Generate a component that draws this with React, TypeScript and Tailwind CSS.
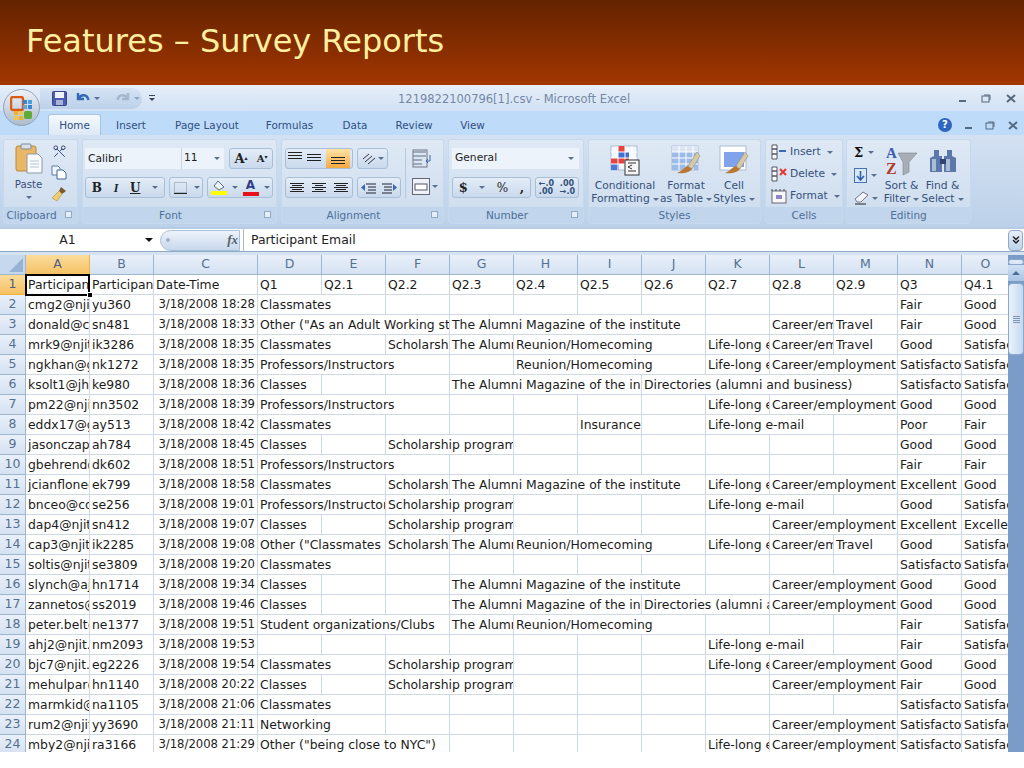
import type { ReactNode } from 'react'
import { ChevronsDown, Scissors } from 'lucide-react'

const COLS = ['A', 'B', 'C', 'D', 'E', 'F', 'G', 'H', 'I', 'J', 'K', 'L', 'M', 'N', 'O']

// [start column index, span, text]
type Entry = [number, number, string]

const CLASSMATES: Entry = [3, 2, 'Classmates']
const CLASSES: Entry = [3, 1, 'Classes']
const PROFS: Entry = [3, 3, 'Professors/Instructors']
const SCHOLAR: Entry = [5, 2, 'Scholarship program']
const SCHOLAR_CLIP: Entry = [5, 1, 'Scholarship program']
const ALUMNI: Entry = [6, 4, 'The Alumni Magazine of the institute']
const ALUMNI_CLIP: Entry = [6, 1, 'The Alumni Magazine of the institute']
const REUNION: Entry = [7, 3, 'Reunion/Homecoming']
const LIFE: Entry = [10, 1, 'Life-long education']
const LIFE_MAIL: Entry = [10, 2, 'Life-long e-mail']
const CAREER: Entry = [11, 2, 'Career/employment services']
const CAREER_CLIP: Entry = [11, 1, 'Career/employment services']
const TRAVEL: Entry = [12, 1, 'Travel']

const q3 = (text: string): Entry => [13, 1, text]
const q4 = (text: string): Entry => [14, 1, text]

const ROWS: { a: string; b: string; t: string; e: Entry[] }[] = [
  { a: 'cmg2@njit.edu', b: 'yu360', t: '18:28', e: [CLASSMATES, q3('Fair'), q4('Good')] },
  { a: 'donald@comcast', b: 'sn481', t: '18:33', e: [[3, 3, 'Other ("As an Adult Working student")'], ALUMNI, CAREER_CLIP, TRAVEL, q3('Fair'), q4('Good')] },
  { a: 'mrk9@njit.edu', b: 'ik3286', t: '18:35', e: [CLASSMATES, SCHOLAR_CLIP, ALUMNI_CLIP, REUNION, LIFE, CAREER_CLIP, TRAVEL, q3('Good'), q4('Satisfactory')] },
  { a: 'ngkhan@gmail', b: 'nk1272', t: '18:35', e: [PROFS, REUNION, LIFE, CAREER, q3('Satisfactory'), q4('Satisfactory')] },
  { a: 'ksolt1@jhu.edu', b: 'ke980', t: '18:36', e: [CLASSES, [6, 3, 'The Alumni Magazine of the institute'], [9, 4, 'Directories (alumni and business)'], q3('Satisfactory'), q4('Satisfactory')] },
  { a: 'pm22@njit.edu', b: 'nn3502', t: '18:39', e: [PROFS, LIFE, CAREER, q3('Good'), q4('Good')] },
  { a: 'eddx17@gmail', b: 'ay513', t: '18:42', e: [CLASSMATES, [8, 1, 'Insurance'], LIFE_MAIL, q3('Poor'), q4('Fair')] },
  { a: 'jasonczap@njit', b: 'ah784', t: '18:45', e: [CLASSES, SCHOLAR, q3('Good'), q4('Good')] },
  { a: 'gbehrend@njit', b: 'dk602', t: '18:51', e: [PROFS, q3('Fair'), q4('Fair')] },
  { a: 'jcianflone@njit', b: 'ek799', t: '18:58', e: [CLASSMATES, SCHOLAR_CLIP, ALUMNI, LIFE, CAREER, q3('Excellent'), q4('Good')] },
  { a: 'bnceo@comcast', b: 'se256', t: '19:01', e: [[3, 2, 'Professors/Instructors'], SCHOLAR, LIFE_MAIL, q3('Good'), q4('Satisfactory')] },
  { a: 'dap4@njit.edu', b: 'sn412', t: '19:07', e: [CLASSES, SCHOLAR, CAREER, q3('Excellent'), q4('Excellent')] },
  { a: 'cap3@njit.edu', b: 'ik2285', t: '19:08', e: [[3, 2, 'Other ("Classmates and friends")'], SCHOLAR_CLIP, ALUMNI_CLIP, REUNION, LIFE, CAREER_CLIP, TRAVEL, q3('Good'), q4('Satisfactory')] },
  { a: 'soltis@njit.edu', b: 'se3809', t: '19:20', e: [CLASSMATES, q3('Satisfactory'), q4('Satisfactory')] },
  { a: 'slynch@ajc.com', b: 'hn1714', t: '19:34', e: [CLASSES, ALUMNI, CAREER, q3('Good'), q4('Good')] },
  { a: 'zannetos@njit', b: 'ss2019', t: '19:46', e: [CLASSES, [6, 3, 'The Alumni Magazine of the institute'], [9, 2, 'Directories (alumni and business)'], CAREER, q3('Good'), q4('Good')] },
  { a: 'peter.belt@njit', b: 'ne1377', t: '19:51', e: [[3, 3, 'Student organizations/Clubs'], ALUMNI_CLIP, REUNION, q3('Fair'), q4('Satisfactory')] },
  { a: 'ahj2@njit.edu', b: 'nm2093', t: '19:53', e: [LIFE_MAIL, q3('Fair'), q4('Satisfactory')] },
  { a: 'bjc7@njit.edu', b: 'eg2226', t: '19:54', e: [CLASSMATES, SCHOLAR, LIFE, CAREER, q3('Good'), q4('Good')] },
  { a: 'mehulpar@njit', b: 'hn1140', t: '20:22', e: [CLASSES, SCHOLAR, CAREER, q3('Fair'), q4('Good')] },
  { a: 'marmkid@aol', b: 'na1105', t: '21:06', e: [CLASSMATES, q3('Satisfactory'), q4('Satisfactory')] },
  { a: 'rum2@njit.edu', b: 'yy3690', t: '21:11', e: [[3, 2, 'Networking'], CAREER, q3('Satisfactory'), q4('Satisfactory')] },
  { a: 'mby2@njit.edu', b: 'ra3166', t: '21:29', e: [[3, 3, 'Other ("being close to NYC")'], LIFE, CAREER, q3('Satisfactory'), q4('Satisfactory')] },
]

const HEAD = ['Participant Email', 'Participant', 'Date-Time', 'Q1', 'Q2.1', 'Q2.2', 'Q2.3', 'Q2.4', 'Q2.5', 'Q2.6', 'Q2.7', 'Q2.8', 'Q2.9', 'Q3', 'Q4.1']

function Cell({ span = 1, children, right }: { span?: number; children?: ReactNode; right?: boolean }) {
  return (
    <div
      className={
        'h-5 overflow-hidden whitespace-nowrap border-r border-b border-[#d0d7e5] pl-[2px] leading-[19px] ' +
        (right ? 'text-right pr-[2px] text-[11.6px]' : '')
      }
      style={{ gridColumn: 'span ' + span }}
    >
      {children}
    </div>
  )
}

function RowHead({ n, active }: { n: number; active?: boolean }) {
  return (
    <div
      className={
        'flex h-5 items-center justify-center border-r border-b text-[12.5px] ' +
        (active
          ? 'border-[#f2b33d] bg-gradient-to-b from-[#fbdc9c] to-[#f5c163] text-[#4b5f7e]'
          : 'border-[#9eb6ce] bg-gradient-to-b from-[#e9f0fa] to-[#d5e2f2] text-[#56708f]')
      }
    >
      {n}
    </div>
  )
}

function DataRow({ n, row }: { n: number; row: (typeof ROWS)[number] }) {
  const cells: ReactNode[] = []
  let col = 3
  for (const [start, span, text] of [...row.e].sort((x, y) => x[0] - y[0])) {
    while (col < start) {
      cells.push(<Cell key={col} />)
      col++
    }
    cells.push(
      <Cell key={col} span={span}>
        {text}
      </Cell>,
    )
    col += span
  }
  return (
    <>
      <RowHead n={n} />
      <Cell>{row.a}</Cell>
      <Cell>{row.b}</Cell>
      <Cell right>3/18/2008 {row.t}</Cell>
      {cells}
    </>
  )
}

function Sheet() {
  return (
    <div className="flex h-[497px] overflow-hidden bg-white font-['DejaVu_Sans',sans-serif] text-[12.4px] text-[#1c1c1c]">
      <div className="grid w-[1008px] flex-none grid-cols-[26px_64px_64px_104px_repeat(11,64px)_48px] content-start overflow-hidden">
        <div className="relative h-5 border-r border-b border-[#9eb6ce] bg-[#c6d8ee]">
          <div className="absolute right-[2px] bottom-[2px] h-0 w-0 border-b-[14px] border-l-[14px] border-b-[#96b3d6] border-l-transparent" />
        </div>
        {COLS.map((c, i) => (
          <div
            key={c}
            className={
              'flex h-5 items-center justify-center border-r border-b text-[12.5px] ' +
              (i === 0
                ? 'border-[#f2b33d] bg-gradient-to-b from-[#fbdc9c] to-[#f5c163] text-[#4b5f7e]'
                : 'border-[#9eb6ce] bg-gradient-to-b from-[#e9f0fa] to-[#d5e2f2] text-[#56708f]')
            }
          >
            {c}
          </div>
        ))}
        <RowHead n={1} active />
        <div className="relative z-10 h-5 whitespace-nowrap pl-[2px] leading-[19px]">
          <div className="h-5 overflow-hidden">{HEAD[0]}</div>
          <div className="absolute -top-px -left-px h-[22px] w-[65px] border-2 border-black" />
          <div className="absolute -right-[3px] -bottom-[3px] h-[6px] w-[6px] border border-white bg-black" />
        </div>
        {HEAD.slice(1).map((h) => (
          <Cell key={h}>{h}</Cell>
        ))}
        {ROWS.map((row, i) => (
          <DataRow key={row.b} n={i + 2} row={row} />
        ))}
      </div>
      <Scrollbar />
    </div>
  )
}

function Scrollbar() {
  return (
    <div className="flex w-4 flex-none flex-col bg-[#7b9bc8]">
      <div className="mt-[4px] h-[6px] rounded-sm border border-[#8aa6ca] bg-[#dce8f6]" />
      <div className="flex h-4 items-center justify-center bg-gradient-to-b from-[#cfe0f4] to-[#a9c4e4]">
        <div className="h-0 w-0 border-r-[4px] border-b-[4px] border-l-[4px] border-r-transparent border-b-[#4d6d95] border-l-transparent" />
      </div>
      <div className="mt-[2px] flex h-[72px] items-center justify-center rounded-sm border border-[#8ca9cc] bg-gradient-to-r from-[#eaf2fb] to-[#c4d8ef]">
        <div className="flex w-[7px] flex-col gap-px">
          <div className="h-px bg-[#7d95b5]" />
          <div className="h-px bg-[#7d95b5]" />
          <div className="h-px bg-[#7d95b5]" />
          <div className="h-px bg-[#7d95b5]" />
        </div>
      </div>
    </div>
  )
}

/* ribbon parts */

function Group({ w, label, launcher, children }: { w: string; label: string; launcher?: boolean; children: ReactNode }) {
  return (
    <div className={w + ' flex h-[85px] flex-none flex-col overflow-hidden rounded-[3px] border border-[#c6d8ec] bg-gradient-to-b from-[#dfe9f5] to-[#ccdcee]'}>
      <div className="min-h-0 flex-1">{children}</div>
      <div className={'relative flex h-[16px] flex-none items-center justify-center bg-[#c1d6ec] text-[10.5px] leading-none text-[#4f6f98] ' + (launcher ? 'pr-[18px]' : '')}>
        {label}
        {launcher && (
          <div className="absolute right-[5px] top-[4px] h-[7px] w-[7px] border border-[#8fa9c6] bg-[#e6eef8]" />
        )}
      </div>
    </div>
  )
}

function Pill({ className = '', children }: { className?: string; children: ReactNode }) {
  return (
    <div className={'flex h-[21px] items-center rounded-[3px] border border-[#a9bfd8] bg-gradient-to-b from-[#e4edf8] to-[#c9d9ec] ' + className}>
      {children}
    </div>
  )
}

function Caret({ className = '' }: { className?: string }) {
  return <div className={'h-0 w-0 flex-none border-t-[3px] border-r-[3px] border-l-[3px] border-t-[#5a7090] border-r-transparent border-l-transparent ' + className} />
}

function InlineCaret() {
  return <Caret className="ml-[3px] inline-block align-middle" />
}

function Lines({ widths, gap = 2 }: { widths: number[]; gap?: number }) {
  return (
    <svg width="14" height={widths.length * (1 + gap)} className="flex-none">
      {widths.map((w, i) => (
        <rect key={i} x={(14 - w) / 2} y={i * (1 + gap)} width={w} height="1" fill="#222" />
      ))}
    </svg>
  )
}

function TableIcon({ fill }: { fill: 'cond' | 'table' | 'cell' }) {
  return (
    <svg width="34" height="32" viewBox="0 0 34 32" className="flex-none">
      <rect x="3" y="1" width="26" height="24" fill={fill === 'cell' ? '#fff' : '#f4f8fc'} stroke="#a9bdd4" />
      {fill === 'cell' && <rect x="7" y="7" width="20" height="15" fill="#7fa4ec" />}
      {fill === 'cond' && (
        <>
          <rect x="10" y="1" width="7" height="6" fill="#e8443f" />
          <rect x="10" y="7" width="11" height="6" fill="#3f6fd0" />
          <rect x="3" y="13" width="8" height="6" fill="#e8443f" />
          <rect x="11" y="13" width="10" height="6" fill="#e8443f" />
          <rect x="3" y="19" width="8" height="6" fill="#4a78d8" />
        </>
      )}
      {fill === 'table' && (
        <>
          <rect x="3" y="1" width="26" height="6" fill="#dbe5f3" />
          <rect x="3" y="7" width="26" height="18" fill="#9dbbe8" />
        </>
      )}
      {fill !== 'cell' && (
        <path d="M3 7H29M3 13H29M3 19H29M10 1V25M17 1V25M24 1V25" stroke="#fff" strokeWidth="1" fill="none" />
      )}
      {fill === 'cond' ? (
        <>
          <rect x="17" y="15" width="14" height="15" fill="#f6f6f6" stroke="#333" />
          <path d="M20 18H28M24 20L20 22L24 24M20 26H28" stroke="#333" fill="none" />
        </>
      ) : (
        <>
          <path d="M28 7L19 21L23 24L31 11Z" fill="#d5c9a8" stroke="#8a8169" strokeWidth=".5" />
          <path d="M18 21C15 23 13 26 8 28C13 29 20 28 23 24Z" fill="#b87834" />
        </>
      )}
    </svg>
  )
}

function Big({ label, icon, w }: { label: ReactNode; icon: ReactNode; w: string }) {
  return (
    <div className={w + ' flex flex-col items-center pt-[3px]'}>
      <div className="flex h-[36px] items-center">{icon}</div>
      <div className="text-center text-[10.7px] leading-[13px] whitespace-nowrap text-[#35517a]">{label}</div>
    </div>
  )
}

function Ribbon() {
  return (
    <div className="flex h-[92px] gap-[3px] bg-gradient-to-b from-[#d3e1f2] to-[#bcd1e9] pt-[4px] pl-[3px] font-['DejaVu_Sans',sans-serif] text-[#35517a]">
      <Group w="w-[75px] mr-[1px]" label="Clipboard" launcher>
        <div className="flex pt-[3px] pl-[3px]">
          <div className="flex w-[43px] flex-col items-center">
            <svg width="30" height="31" viewBox="0 0 30 31">
              <rect x="2" y="3" width="20" height="25" rx="2" fill="#e9b765" stroke="#b88a3e" />
              <rect x="7" y="1" width="10" height="5" rx="1" fill="#d9dfe8" stroke="#7d8796" />
              <path d="M13 11H24L28 15V30H13Z" fill="#fafbfd" stroke="#8b98aa" />
              <path d="M16 18H25M16 21H25M16 24H25" stroke="#b7c3d2" />
            </svg>
            <div className="mt-[6px] text-[10.2px] leading-none">Paste</div>
            <Caret className="mt-[6px]" />
          </div>
          <div className="flex flex-col items-center gap-[6px] pt-[1px] pl-[1px]">
            <Scissors size={15} strokeWidth={1.6} className="rotate-90 text-[#3b4a78]" />
            <svg width="16" height="15" viewBox="0 0 16 15">
              <path d="M1 1H7L9 3V10H1Z" fill="#f2f6fb" stroke="#5b7fae" />
              <path d="M6 5H12L15 8V14H6Z" fill="#fff" stroke="#45699a" />
            </svg>
            <svg width="16" height="16" viewBox="0 0 16 16">
              <path d="M10 1L15 5L11 8L8 5Z" fill="#7d5a2a" />
              <path d="M8 5L11 8L6 15L1 12Z" fill="#f0cd6e" stroke="#b0893a" strokeWidth=".6" />
            </svg>
          </div>
        </div>
      </Group>
      <Group w="w-[195px] mr-[1px]" label="Font" launcher>
        <div className="flex flex-col gap-[8px] pt-[8px] pl-[2px] text-[#222]">
          <div className="flex items-center gap-[5px]">
            <div className="flex h-[21px] w-[139px] items-center bg-[#edf3fa] text-[10.7px]">
              <span className="w-[97px] border-r border-[#c7d6e7] pl-[3px] leading-[21px]">Calibri</span>
              <span className="flex-1 pl-[2px]">11</span>
              <Caret className="mr-[4px]" />
            </div>
            <Pill className="w-[44px] justify-around font-['DejaVu_Serif',serif] font-bold">
              <span className="text-[13px] leading-none">A<sup className="text-[6px]">▴</sup></span>
              <span className="text-[10px] leading-none">A<sup className="text-[6px]">▾</sup></span>
            </Pill>
          </div>
          <div className="flex items-center gap-[4px]">
            <Pill className="w-[80px] justify-around font-['DejaVu_Serif',serif] text-[12px]">
              <b>B</b>
              <i className="font-['Liberation_Serif',serif] font-bold">I</i>
              <u className="font-bold">U</u>
              <Caret />
            </Pill>
            <Pill className="w-[34px] justify-around">
              <svg width="16" height="14">
                <rect x="1.5" y="1.5" width="12" height="10" fill="none" stroke="#7d8ea3" strokeDasharray="1 1" />
                <rect x="1" y="12" width="13" height="1" fill="#222" />
              </svg>
              <Caret />
            </Pill>
            <Pill className="w-[66px] justify-around">
              <div className="flex flex-col items-center">
                <svg width="14" height="11" viewBox="0 0 14 11">
                  <path d="M6 1L12 7L7 10L2 6Z" fill="#eef3f9" stroke="#5b6d86" />
                </svg>
                <div className="h-[4px] w-[16px] bg-[#ffff00]" />
              </div>
              <Caret />
              <div className="flex flex-col items-center">
                <span className="text-[12px] leading-[11px] font-bold text-[#2f3f88]">A</span>
                <div className="mt-px h-[4px] w-[16px] bg-[#e8101a]" />
              </div>
              <Caret />
            </Pill>
          </div>
        </div>
      </Group>
      <Group w="w-[163px] mr-[1px]" label="Alignment" launcher>
        <div className="flex pt-[8px] pl-[3px]">
          <div className="flex flex-col gap-[8px]">
            <div className="flex gap-[4px]">
              <Pill className="w-[68px] justify-around overflow-hidden">
                <div className="self-start pt-[3px]"><Lines widths={[14, 14, 14]} /></div>
                <Lines widths={[14, 14, 14]} />
                <div className="flex h-full w-[24px] items-end justify-center bg-gradient-to-b from-[#fde3a6] to-[#f6a93c] pb-[2px]"><Lines widths={[14, 14, 14]} /></div>
              </Pill>
              <Pill className="w-[31px] justify-center gap-[2px]">
                <svg width="14" height="12" viewBox="0 0 14 12"><path d="M1 6L7 1M3 9L10 3M6 11L13 5" stroke="#334" fill="none" /></svg>
                <Caret />
              </Pill>
            </div>
            <div className="flex gap-[4px]">
              <Pill className="w-[68px] justify-around">
                <Lines widths={[14, 10, 14, 10, 14]} gap={1} />
                <Lines widths={[14, 8, 14, 8, 14]} gap={1} />
                <Lines widths={[14, 10, 14, 10, 14]} gap={1} />
              </Pill>
              <Pill className="w-[44px] justify-around">
                <svg width="15" height="13"><path d="M5 3H15M7 6H15M7 9H15M5 12H15" stroke="#223" /><path d="M0 6.5L4 3V10Z" fill="#3b6ab0" /></svg>
                <svg width="15" height="13"><path d="M0 3H10M2 6H10M2 9H10M0 12H10" stroke="#223" /><path d="M15 6.5L11 3V10Z" fill="#3b6ab0" /></svg>
              </Pill>
            </div>
          </div>
          <div className="mx-[4px] w-px bg-[#b6c9df]" />
          <div className="flex flex-col gap-[9px] pl-[2px]">
            <svg width="22" height="20" viewBox="0 0 22 20" className="mt-[1px]">
              <path d="M1 3H14M1 7H14M1 11H10M1 15H10" stroke="#5f6f80" strokeWidth="1.2" />
              <rect x="1" y="1" width="14" height="17" fill="none" stroke="#778" />
              <path d="M18 6V12H14M16 10L14 12L16 14" stroke="#3b6ab0" fill="none" />
            </svg>
            <div className="flex items-center gap-[2px]">
              <svg width="18" height="17" viewBox="0 0 18 17">
                <rect x=".5" y=".5" width="17" height="16" fill="#eef3f9" stroke="#667" />
                <rect x="3" y="6" width="12" height="6" fill="#fff" stroke="#556" />
              </svg>
              <Caret />
            </div>
          </div>
        </div>
      </Group>
      <Group w="w-[136px] mr-[1px]" label="Number" launcher>
        <div className="flex flex-col gap-[8px] pt-[8px] pl-[3px] text-[#222]">
          <div className="flex h-[21px] w-[127px] items-center justify-between bg-[#edf3fa] pl-[3px] text-[10.7px]">
            General
            <Caret className="mr-[5px]" />
          </div>
          <div className="flex gap-[4px]">
            <Pill className="w-[79px] justify-around font-['DejaVu_Serif',serif] text-[13px]">
              <b>$</b>
              <Caret />
              <span className="text-[12px]">%</span>
              <b>,</b>
            </Pill>
            <Pill className="w-[44px] justify-around text-[8px] leading-[8px] font-bold">
              <span className="text-[#33507a]">←.0<br />.00</span>
              <span className="text-[#33507a]">.00<br />→.0</span>
            </Pill>
          </div>
        </div>
      </Group>
      <Group w="w-[173px] mr-[1px]" label="Styles">
        <div className="flex">
          <Big w="w-[72px]" icon={<TableIcon fill="cond" />} label={<>Conditional<br />Formatting<InlineCaret /></>} />
          <Big w="w-[50px]" icon={<TableIcon fill="table" />} label={<>Format<br />as Table<InlineCaret /></>} />
          <Big w="w-[46px]" icon={<TableIcon fill="cell" />} label={<>Cell<br />Styles<InlineCaret /></>} />
        </div>
      </Group>
      <Group w="w-[78px]" label="Cells">
        <div className="flex flex-col gap-[4px] pt-[3px] pl-[5px] text-[10.7px] leading-[18px]">
          <div className="flex items-center gap-[3px]">
            <svg width="16" height="16" viewBox="0 0 16 16"><path d="M1 1H6V5H1ZM1 5H6V10H1ZM1 10H6V15H1Z" fill="#fff" stroke="#556" /><path d="M8 7H15" stroke="#3b6ab0" strokeWidth="2" /></svg>
            Insert <Caret className="ml-[3px]" />
          </div>
          <div className="flex items-center gap-[3px]">
            <svg width="16" height="16" viewBox="0 0 16 16"><path d="M1 1H6V5H1ZM1 5H6V10H1ZM1 10H6V15H1Z" fill="#fff" stroke="#556" /><path d="M9 3L15 9M15 3L9 9" stroke="#e8352e" strokeWidth="2" /></svg>
            Delete <Caret className="ml-[3px]" />
          </div>
          <div className="flex items-center gap-[3px]">
            <svg width="16" height="16" viewBox="0 0 16 16"><rect x="1" y="3" width="14" height="12" fill="#f8f8fa" stroke="#667" /><rect x="5" y="7" width="6" height="4" fill="#8e84c8" /><path d="M1 1V3M5 1V3M9 1V3M13 1V3" stroke="#445" /></svg>
            Format <Caret className="ml-[3px]" />
          </div>
        </div>
      </Group>
      <Group w="w-[125px]" label="Editing">
        <div className="flex pl-[7px]">
          <div className="flex w-[27px] flex-col gap-[8px] pt-[5px]">
            <div className="flex items-center gap-[5px] font-['DejaVu_Serif',serif] text-[13px] leading-[15px] font-bold text-[#111]">
              Σ
              <Caret />
            </div>
            <div className="flex items-center gap-[4px]">
              <svg width="13" height="15" viewBox="0 0 13 15"><rect x=".5" y=".5" width="12" height="14" fill="#d9e6f6" stroke="#4a74b0" /><path d="M6.5 3V11M3 8L6.5 12L10 8" stroke="#2f62b0" strokeWidth="1.6" fill="none" /></svg>
              <Caret />
            </div>
            <div className="flex items-center gap-[3px]">
              <svg width="15" height="14" viewBox="0 0 15 14"><path d="M9 1L14 4L7 11H3L1 8Z" fill="#eff2f6" stroke="#778" /><path d="M1 13H12" stroke="#222" /></svg>
              <Caret />
            </div>
          </div>
          <Big
            w="w-[41px]"
            icon={
              <svg width="32" height="30" viewBox="0 0 32 30">
                <path d="M12 7H31L23 16V26L17 29V16Z" fill="#a9aeb6" stroke="#7d838d" strokeWidth=".6" />
                <text x="0" y="12" fontFamily="Liberation Serif" fontWeight="700" fontSize="15" fill="#3a5fb0">A</text>
                <text x="0" y="28" fontFamily="Liberation Serif" fontWeight="700" fontSize="16" fill="#b23c2e">Z</text>
              </svg>
            }
            label={<>Sort &amp;<br />Filter<InlineCaret /></>}
          />
          <Big
            w="w-[41px]"
            icon={
              <svg width="28" height="26" viewBox="0 0 28 26">
                <path d="M5 2H10V8H13V24H1V10L5 8ZM18 2H23V8L27 10V24H15V8H18Z" fill="#5c78a8" />
                <path d="M3 11H7V23H3ZM17 11H21V23H17Z" fill="#a9bdd9" />
                <rect x="11" y="11" width="6" height="5" fill="#2f4570" />
              </svg>
            }
            label={<>Find &amp;<br />Select<InlineCaret /></>}
          />
        </div>
      </Group>
    </div>
  )
}

function WinButtons({ help }: { help?: boolean }) {
  return (
    <div className={'flex items-center ' + (help ? 'gap-[13px] pr-[6px]' : 'gap-[15px] pr-[8px]')}>
      {help && (
        <div className="flex h-[14px] w-[14px] items-center justify-center rounded-full bg-[#2f66c0] text-[10px] leading-none font-bold text-white">?</div>
      )}
      <div className="mt-[5px] h-[2px] w-[7px] bg-[#55697f]" />
      <svg width="10" height="9" viewBox="0 0 10 9">
        <rect x="1" y="2" width="7" height="6" fill="none" stroke="#55697f" />
        <path d="M3 1H9V6" fill="none" stroke="#55697f" />
      </svg>
      <svg width="10" height="9" viewBox="0 0 10 9">
        <path d="M1 1L9 8M9 1L1 8" stroke="#55697f" strokeWidth="2" />
      </svg>
    </div>
  )
}

function OfficeButton() {
  return (
    <div className="absolute top-[4px] left-[3px] flex h-[37px] w-[37px] items-center justify-center rounded-full border border-[#8fa3bb] bg-gradient-to-b from-[#eef2f7] to-[#aebccd]">
      <svg width="24" height="24" viewBox="0 0 24 24">
        <rect x="1" y="1" width="12" height="13" rx="2" fill="none" stroke="#dd5a12" strokeWidth="2.4" />
        <rect x="13" y="4" width="4" height="4" fill="#3a86d6" />
        <rect x="18" y="4" width="4" height="4" fill="#4aa0de" />
        <rect x="13" y="9" width="4" height="4" fill="#59a8e0" />
        <rect x="18" y="9" width="4" height="4" fill="#3a86d6" />
        <rect x="4" y="15" width="4" height="4" fill="#eeb52b" />
        <rect x="9" y="15" width="4" height="4" fill="#f1c84a" />
        <rect x="4" y="20" width="4" height="4" fill="#f1c84a" />
        <rect x="9" y="20" width="4" height="4" fill="#eeb52b" />
        <rect x="14" y="15" width="8" height="8" rx="2" fill="#5eab38" />
      </svg>
    </div>
  )
}

function QuickAccess() {
  return (
    <div className="flex h-[26px] items-center pl-[40px]">
      <div className="flex h-[21px] w-[102px] items-center gap-[7px] rounded-r-full bg-gradient-to-b from-[#d5e3f4] to-[#bcd1ea] pl-[12px]">
        <svg width="15" height="15" viewBox="0 0 15 15">
          <rect x=".5" y=".5" width="14" height="14" rx="1" fill="#4a5bb0" stroke="#3a4688" />
          <rect x="3" y="1" width="9" height="6" fill="#eef2fa" />
          <rect x="4" y="9" width="7" height="5" fill="#a8b4d4" />
        </svg>
        <div className="ml-[2px] flex items-center gap-[3px]">
          <svg width="15" height="14" viewBox="0 0 15 14">
            <path d="M2 2V8H8M2.5 7.5C5 3 11 3 12.5 9" stroke="#3169b8" strokeWidth="2.4" fill="none" />
          </svg>
          <Caret />
        </div>
        <div className="ml-[8px] flex items-center gap-[4px] opacity-50">
          <svg width="15" height="14" viewBox="0 0 15 14">
            <path d="M13 2V8H7M12.5 7.5C10 3 4 3 2.5 9" stroke="#7d94ad" strokeWidth="2.4" fill="none" />
          </svg>
          <Caret />
        </div>
      </div>
      <div className="ml-[7px] flex flex-col items-center gap-[2px]">
        <div className="h-px w-[6px] bg-[#33475f]" />
        <Caret className="border-t-[#33475f]" />
      </div>
    </div>
  )
}

function FormulaBar() {
  return (
    <div className="flex h-[23px] items-center border-b border-[#8fa9c8] bg-white font-['DejaVu_Sans',sans-serif] text-[12.4px] text-[#222]">
      <div className="flex w-[160px] flex-none items-center pr-[7px]">
        <span className="flex-1 pl-[4px] pr-[14px] text-center">A1</span>
        <div className="h-0 w-0 border-t-[4px] border-r-[4px] border-l-[4px] border-t-[#111] border-r-transparent border-l-transparent" />
      </div>
      <div className="flex h-[21px] w-[80px] flex-none items-center justify-between rounded-l-full border border-[#a9c0da] bg-gradient-to-b from-[#eef3fa] to-[#c7d8ec] pr-[1px] pl-[5px]">
        <div className="h-[4px] w-[4px] rounded-full bg-[#9fb2c9]" />
        <i className="font-['Liberation_Serif',serif] text-[13px] font-bold text-[#55606e]">fx</i>
      </div>
      <div className="ml-[3px] h-full w-px bg-[#a9bdd4]" />
      <span className="flex-1 pl-[7px]">Participant Email</span>
      <div className="mr-px flex h-[21px] w-[15px] items-center justify-center rounded-sm border border-[#8fa9c8] bg-gradient-to-b from-[#e7effa] to-[#bed2ea] text-[#222]">
        <ChevronsDown size={12} strokeWidth={3} />
      </div>
    </div>
  )
}

export default function App() {
  return (
    <div className="h-[768px] w-[1024px] overflow-hidden bg-white">
      <div className="flex h-[85px] items-start bg-gradient-to-b from-[#642300] to-[#a33600] pt-[19px] pl-[26px] font-['DejaVu_Sans',sans-serif] text-[32px] leading-[44px] text-[#fff0a0]">
        Features – Survey Reports
      </div>
      <div className="relative font-['DejaVu_Sans',sans-serif]">
        <div className="flex h-[26px] bg-gradient-to-b from-[#e6eef9] to-[#d2e1f4]">
          <QuickAccess />
          <div className="flex-1 pt-[6px] pl-[243px] text-[11.5px] leading-[16px] whitespace-nowrap text-[#7488a6]">
            1219822100796[1].csv - Microsoft Excel
          </div>
          <WinButtons />
        </div>
        <div className="flex h-[24px] items-end bg-[#bfdbfa] pl-[48px] text-[10.4px] text-[#2f4f80]">
          <div className="flex h-[21px] w-[53px] items-center justify-center rounded-t-[3px] border border-b-0 border-[#a9c4e0] bg-gradient-to-b from-[#f5f9fd] to-[#dde9f6] pt-[2px]">Home</div>
          <div className="flex h-[21px] w-[60px] items-center justify-center pt-[2px]">Insert</div>
          <div className="flex h-[21px] w-[92px] items-center justify-center pt-[2px]">Page Layout</div>
          <div className="flex h-[21px] w-[73px] items-center justify-center pt-[2px]">Formulas</div>
          <div className="flex h-[21px] w-[58px] items-center justify-center pt-[2px]">Data</div>
          <div className="flex h-[21px] w-[60px] items-center justify-center pt-[2px]">Review</div>
          <div className="flex h-[21px] w-[57px] items-center justify-center pt-[2px]">View</div>
          <div className="flex-1" />
          <div className="pb-[3px]">
            <WinButtons help />
          </div>
        </div>
        <OfficeButton />
        <Ribbon />
        <div className="h-[2px] bg-[#b5cbe3]" />
        <FormulaBar />
        <div className="h-[3px] bg-[#d5e2f2]" />
        <Sheet />
      </div>
    </div>
  )
}
